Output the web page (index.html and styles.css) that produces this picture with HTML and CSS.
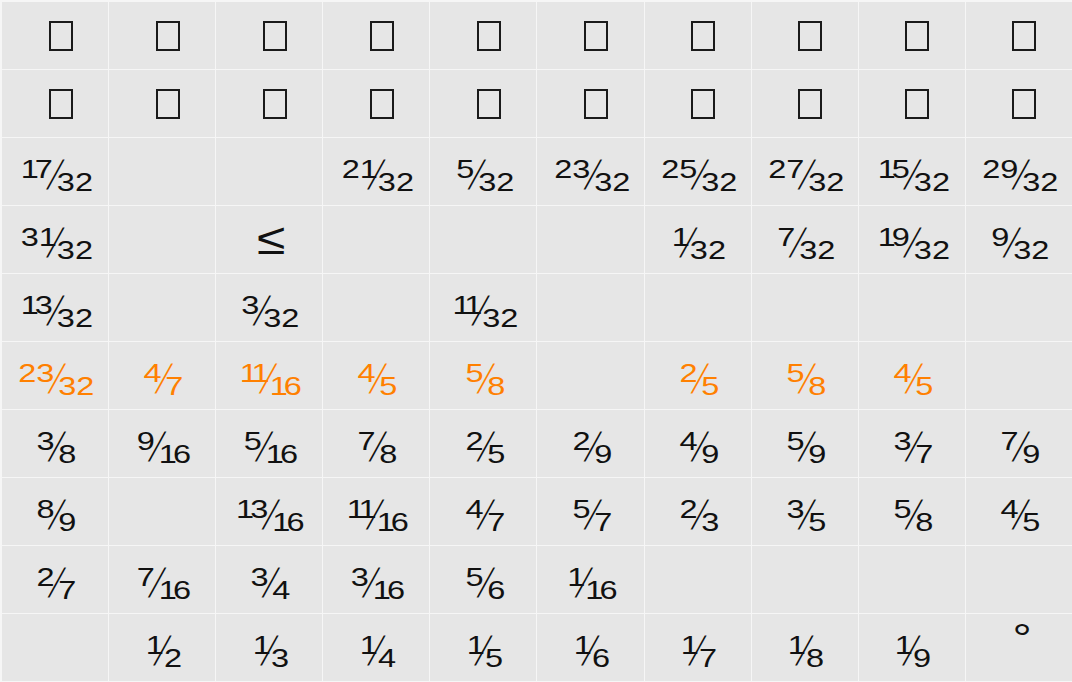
FILE: index.html
```html
<!DOCTYPE html>
<html>
<head>
<meta charset="utf-8">
<link rel="stylesheet" href="styles.css">
</head>
<body>
<div class="grid">
  <div class="c"><span class="tofu"></span></div><div class="c"><span class="tofu"></span></div><div class="c"><span class="tofu"></span></div><div class="c"><span class="tofu"></span></div><div class="c"><span class="tofu"></span></div><div class="c"><span class="tofu"></span></div><div class="c"><span class="tofu"></span></div><div class="c"><span class="tofu"></span></div><div class="c"><span class="tofu"></span></div><div class="c"><span class="tofu"></span></div>
  <div class="c"><span class="tofu"></span></div><div class="c"><span class="tofu"></span></div><div class="c"><span class="tofu"></span></div><div class="c"><span class="tofu"></span></div><div class="c"><span class="tofu"></span></div><div class="c"><span class="tofu"></span></div><div class="c"><span class="tofu"></span></div><div class="c"><span class="tofu"></span></div><div class="c"><span class="tofu"></span></div><div class="c"><span class="tofu"></span></div>

  <div class="c"><span class="fr"><span class="n"><span class="one">1</span>7</span><span class="sl">/</span><span class="d">32</span></span></div>
  <div class="c"></div>
  <div class="c"></div>
  <div class="c"><span class="fr"><span class="n">2<span class="one">1</span></span><span class="sl">/</span><span class="d">32</span></span></div>
  <div class="c"><span class="fr"><span class="n">5</span><span class="sl">/</span><span class="d">32</span></span></div>
  <div class="c"><span class="fr"><span class="n">23</span><span class="sl">/</span><span class="d">32</span></span></div>
  <div class="c"><span class="fr"><span class="n">25</span><span class="sl">/</span><span class="d">32</span></span></div>
  <div class="c"><span class="fr"><span class="n">27</span><span class="sl">/</span><span class="d">32</span></span></div>
  <div class="c"><span class="fr"><span class="n"><span class="one">1</span>5</span><span class="sl">/</span><span class="d">32</span></span></div>
  <div class="c"><span class="fr"><span class="n">29</span><span class="sl">/</span><span class="d">32</span></span></div>

  <div class="c"><span class="fr"><span class="n">3<span class="one">1</span></span><span class="sl">/</span><span class="d">32</span></span></div>
  <div class="c"></div>
  <div class="c"><span class="sym">≤</span></div>
  <div class="c"></div>
  <div class="c"></div>
  <div class="c"></div>
  <div class="c"><span class="fr"><span class="n"><span class="one">1</span></span><span class="sl">/</span><span class="d">32</span></span></div>
  <div class="c"><span class="fr"><span class="n">7</span><span class="sl">/</span><span class="d">32</span></span></div>
  <div class="c"><span class="fr"><span class="n"><span class="one">1</span>9</span><span class="sl">/</span><span class="d">32</span></span></div>
  <div class="c"><span class="fr"><span class="n">9</span><span class="sl">/</span><span class="d">32</span></span></div>

  <div class="c"><span class="fr"><span class="n"><span class="one">1</span>3</span><span class="sl">/</span><span class="d">32</span></span></div>
  <div class="c"></div>
  <div class="c"><span class="fr"><span class="n">3</span><span class="sl">/</span><span class="d">32</span></span></div>
  <div class="c"></div>
  <div class="c"><span class="fr"><span class="n"><span class="one">11</span></span><span class="sl">/</span><span class="d">32</span></span></div>
  <div class="c"></div>
  <div class="c"></div>
  <div class="c"></div>
  <div class="c"></div>
  <div class="c"></div>

  <div class="c hl"><span class="fr"><span class="n">23</span><span class="sl">/</span><span class="d">32</span></span></div>
  <div class="c hl"><span class="fr"><span class="n">4</span><span class="sl">/</span><span class="d">7</span></span></div>
  <div class="c hl"><span class="fr"><span class="n"><span class="one">11</span></span><span class="sl">/</span><span class="d"><span class="one">1</span>6</span></span></div>
  <div class="c hl"><span class="fr"><span class="n">4</span><span class="sl">/</span><span class="d">5</span></span></div>
  <div class="c hl"><span class="fr"><span class="n">5</span><span class="sl">/</span><span class="d">8</span></span></div>
  <div class="c hl"></div>
  <div class="c hl"><span class="fr"><span class="n">2</span><span class="sl">/</span><span class="d">5</span></span></div>
  <div class="c hl"><span class="fr"><span class="n">5</span><span class="sl">/</span><span class="d">8</span></span></div>
  <div class="c hl"><span class="fr"><span class="n">4</span><span class="sl">/</span><span class="d">5</span></span></div>
  <div class="c hl"></div>

  <div class="c"><span class="fr"><span class="n">3</span><span class="sl">/</span><span class="d">8</span></span></div>
  <div class="c"><span class="fr"><span class="n">9</span><span class="sl">/</span><span class="d"><span class="one">1</span>6</span></span></div>
  <div class="c"><span class="fr"><span class="n">5</span><span class="sl">/</span><span class="d"><span class="one">1</span>6</span></span></div>
  <div class="c"><span class="fr"><span class="n">7</span><span class="sl">/</span><span class="d">8</span></span></div>
  <div class="c"><span class="fr"><span class="n">2</span><span class="sl">/</span><span class="d">5</span></span></div>
  <div class="c"><span class="fr"><span class="n">2</span><span class="sl">/</span><span class="d">9</span></span></div>
  <div class="c"><span class="fr"><span class="n">4</span><span class="sl">/</span><span class="d">9</span></span></div>
  <div class="c"><span class="fr"><span class="n">5</span><span class="sl">/</span><span class="d">9</span></span></div>
  <div class="c"><span class="fr"><span class="n">3</span><span class="sl">/</span><span class="d">7</span></span></div>
  <div class="c"><span class="fr"><span class="n">7</span><span class="sl">/</span><span class="d">9</span></span></div>

  <div class="c"><span class="fr"><span class="n">8</span><span class="sl">/</span><span class="d">9</span></span></div>
  <div class="c"></div>
  <div class="c"><span class="fr"><span class="n"><span class="one">1</span>3</span><span class="sl">/</span><span class="d"><span class="one">1</span>6</span></span></div>
  <div class="c"><span class="fr"><span class="n"><span class="one">11</span></span><span class="sl">/</span><span class="d"><span class="one">1</span>6</span></span></div>
  <div class="c"><span class="fr"><span class="n">4</span><span class="sl">/</span><span class="d">7</span></span></div>
  <div class="c"><span class="fr"><span class="n">5</span><span class="sl">/</span><span class="d">7</span></span></div>
  <div class="c"><span class="fr"><span class="n">2</span><span class="sl">/</span><span class="d">3</span></span></div>
  <div class="c"><span class="fr"><span class="n">3</span><span class="sl">/</span><span class="d">5</span></span></div>
  <div class="c"><span class="fr"><span class="n">5</span><span class="sl">/</span><span class="d">8</span></span></div>
  <div class="c"><span class="fr"><span class="n">4</span><span class="sl">/</span><span class="d">5</span></span></div>

  <div class="c"><span class="fr"><span class="n">2</span><span class="sl">/</span><span class="d">7</span></span></div>
  <div class="c"><span class="fr"><span class="n">7</span><span class="sl">/</span><span class="d"><span class="one">1</span>6</span></span></div>
  <div class="c"><span class="fr"><span class="n">3</span><span class="sl">/</span><span class="d">4</span></span></div>
  <div class="c"><span class="fr"><span class="n">3</span><span class="sl">/</span><span class="d"><span class="one">1</span>6</span></span></div>
  <div class="c"><span class="fr"><span class="n">5</span><span class="sl">/</span><span class="d">6</span></span></div>
  <div class="c"><span class="fr"><span class="n"><span class="one">1</span></span><span class="sl">/</span><span class="d"><span class="one">1</span>6</span></span></div>
  <div class="c"></div>
  <div class="c"></div>
  <div class="c"></div>
  <div class="c"></div>

  <div class="c"></div>
  <div class="c"><span class="fr"><span class="n"><span class="one">1</span></span><span class="sl">/</span><span class="d">2</span></span></div>
  <div class="c"><span class="fr"><span class="n"><span class="one">1</span></span><span class="sl">/</span><span class="d">3</span></span></div>
  <div class="c"><span class="fr"><span class="n"><span class="one">1</span></span><span class="sl">/</span><span class="d">4</span></span></div>
  <div class="c"><span class="fr"><span class="n"><span class="one">1</span></span><span class="sl">/</span><span class="d">5</span></span></div>
  <div class="c"><span class="fr"><span class="n"><span class="one">1</span></span><span class="sl">/</span><span class="d">6</span></span></div>
  <div class="c"><span class="fr"><span class="n"><span class="one">1</span></span><span class="sl">/</span><span class="d">7</span></span></div>
  <div class="c"><span class="fr"><span class="n"><span class="one">1</span></span><span class="sl">/</span><span class="d">8</span></span></div>
  <div class="c"><span class="fr"><span class="n"><span class="one">1</span></span><span class="sl">/</span><span class="d">9</span></span></div>
  <div class="c top"><span class="deg">°</span></div>
</div>
</body>
</html>
```
FILE: styles.css
```css
html, body {
  margin: 0;
  padding: 0;
  background: #f5f5f5;
}

body {
  width: 1072px;
  height: 682px;
  overflow: hidden;
  font-family: "Liberation Sans", Arial, sans-serif;
  color: #111;
}

.grid {
  display: grid;
  grid-template-columns: repeat(10, 1fr);
  grid-template-rows: repeat(10, 67px);
  gap: 1px;
  padding: 2px 0 0 2px;
  background: #f6f6f6;
  width: 1072px;
  height: 682px;
  box-sizing: border-box;
}

.c {
  background: #e6e6e6;
  display: flex;
  align-items: center;
  justify-content: center;
  padding-top: 7px;
  padding-left: 3px;
  box-sizing: border-box;
}

.c.top {
  align-items: flex-start;
  padding-top: 0;
}

.hl {
  color: #ff8000;
}

.tofu {
  display: block;
  width: 24px;
  height: 30px;
  border: 2px solid #1a1a1a;
  box-sizing: border-box;
  margin-left: 8px;
  margin-top: -7px;
}

.fr {
  display: inline-flex;
  height: 31px;
  font-size: 25px;
  transform: scaleX(1.3);
}

.n {
  align-self: flex-start;
  line-height: 18px;
}

.d {
  align-self: flex-end;
  line-height: 18px;
}

.one {
  letter-spacing: -3px;
}

.sl {
  display: flex;
  justify-content: center;
  width: 3px;
  font-size: 25px;
  line-height: 31px;
  height: 31px;
  transform: skewX(-17deg) scale(0.73, 1.63);
}

.sym {
  font-size: 44px;
  line-height: 44px;
  margin-top: -9px;
  transform: scaleX(1.18);
}

.deg {
  font-size: 40px;
  line-height: 40px;
  margin-top: 4px;
  margin-left: 4px;
  transform: scaleX(1.2);
}
```
